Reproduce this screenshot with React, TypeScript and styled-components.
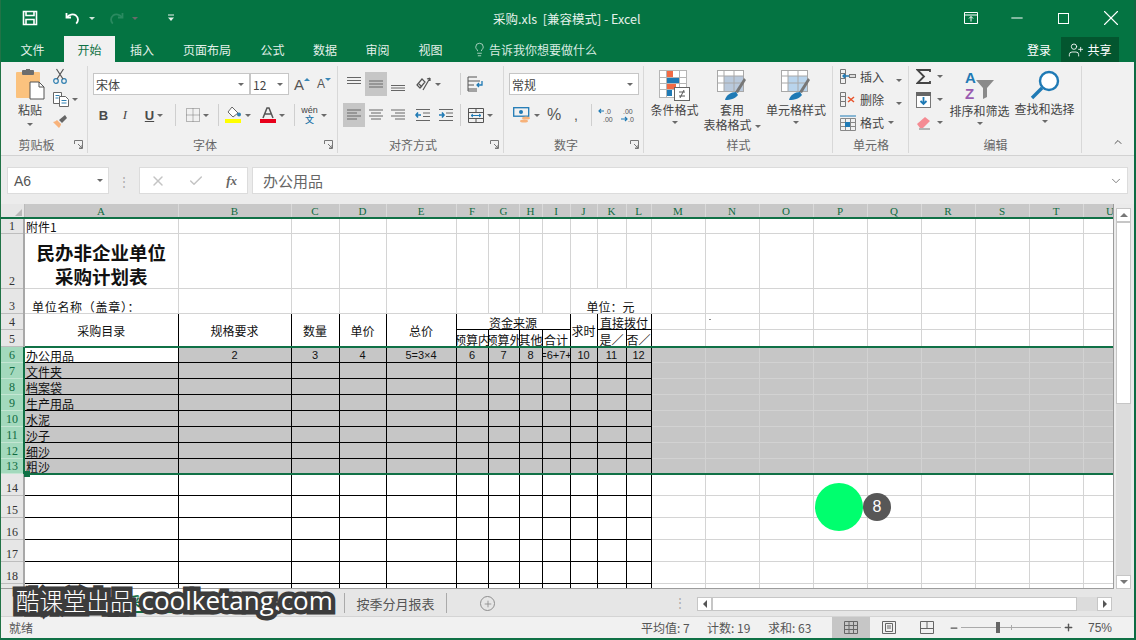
import React from 'react'
import styled, { createGlobalStyle } from 'styled-components'
import { Check, ChevronUp, ChevronDown, Lightbulb, Minus, Plus, UserPlus, X } from 'lucide-react'

const CJK = `"Noto Sans CJK SC", "Liberation Sans", sans-serif`

const GlobalStyle = createGlobalStyle`
  html, body {
    margin: 0;
    padding: 0;
    width: 1136px;
    height: 640px;
    overflow: hidden;
    background: #f1f1f1;
    font-family: ${CJK};
  }
  * { box-sizing: border-box; }
`

const Window = styled.div`
  position: relative;
  width: 1136px;
  height: 640px;
  display: flex;
  flex-direction: column;
  overflow: hidden;
  background: #f1f1f1;
  border-left: 1px solid #217346;
  border-right: 2px solid #0d6b43;
  border-bottom: 2px solid #107146;
`

/* ---------- title bar ---------- */

const TitleBar = styled.div`
  height: 36px;
  flex: none;
  background: #047442;
  color: #fff;
  display: flex;
  align-items: center;
`

const Qat = styled.div`
  display: flex;
  align-items: center;
  padding-left: 21px;
  width: 440px;
  flex: none;
`

const QatBtn = styled.span<{ $w: number }>`
  display: inline-flex;
  align-items: center;
  gap: 8px;
  width: ${(p) => p.$w}px;
`

const TitleText = styled.div`
  flex: 1;
  font-size: 12.5px;
  color: #e4f1ea;
  padding-left: 52px;
  white-space: pre;
`

const WinButtons = styled.div`
  display: flex;
  align-items: center;
  flex: none;
`

const WinBtn = styled.span`
  width: 46.7px;
  display: inline-flex;
  justify-content: center;
  color: #fff;
`

const MaxBox = styled.span`
  display: block;
  width: 11px;
  height: 11px;
  border: 1px solid #fff;
`

/* ---------- tabs ---------- */

const TabBar = styled.div`
  height: 26px;
  flex: none;
  background: #047442;
  display: flex;
  align-items: flex-end;
`

const Tab = styled.div<{ $active?: boolean; $w: number }>`
  width: ${(p) => p.$w}px;
  height: 26px;
  display: flex;
  align-items: center;
  justify-content: center;
  font-size: 12px;
  color: ${(p) => (p.$active ? '#107146' : '#e3f0e9')};
  background: ${(p) => (p.$active ? '#f1f1f1' : 'transparent')};
`

const TellMe = styled.div`
  display: flex;
  align-items: center;
  gap: 2px;
  margin-left: 16px;
  height: 26px;
  font-size: 12px;
  color: #d8ebe1;
  flex: 1;
`

const Login = styled.div`
  font-size: 12px;
  color: #fff;
  height: 26px;
  display: flex;
  align-items: center;
  margin-right: 10px;
`

const Share = styled.div`
  width: 58px;
  height: 25px;
  margin-right: 15px;
  background: #03562f;
  color: #fff;
  font-size: 12px;
  display: flex;
  align-items: center;
  justify-content: center;
  gap: 3px;
`

/* ---------- ribbon ---------- */

const Ribbon = styled.div`
  height: 94px;
  flex: none;
  display: flex;
  background: #f1f1f1;
  border-bottom: 1px solid #d2d2d2;
  position: relative;
`

const Group = styled.div<{ $w: number }>`
  width: ${(p) => p.$w}px;
  flex: none;
  position: relative;
  display: flex;
  flex-direction: column;
  padding-bottom: 1px;
  &::after {
    content: '';
    position: absolute;
    right: 0;
    top: 4px;
    bottom: 2px;
    width: 1px;
    background: #d8d8d8;
  }
`

const GroupBody = styled.div`
  flex: 1;
  display: flex;
  min-height: 0;
`

const GroupLabel = styled.div<{ $launch?: boolean }>`
  height: 20px;
  flex: none;
  display: flex;
  align-items: center;
  justify-content: center;
  font-size: 12px;
  color: #666;
  position: relative;
  padding-right: ${(p) => (p.$launch ? 16 : 0)}px;
`

const Launcher = styled.svg`
  position: absolute;
  right: 5px;
  top: 6px;
  width: 9px;
  height: 9px;
`

const Caret = styled.span<{ $light?: boolean }>`
  display: inline-block;
  width: 0;
  height: 0;
  border-left: 3px solid transparent;
  border-right: 3px solid transparent;
  border-top: 3px solid ${(p) => (p.$light ? '#cfe6da' : '#6a6a6a')};
`

const PasteCol = styled.div`
  width: 48px;
  display: flex;
  flex-direction: column;
  align-items: center;
  padding: 7px 0 0 10px;
  font-size: 12px;
  color: #444;
  line-height: 14px;
  gap: 1px;
  & > span {
    margin-top: 5px;
  }
`

const SmallCol = styled.div`
  display: flex;
  flex-direction: column;
  gap: 3px;
  padding: 6px 0 0 3px;
`

const Stack = styled.div`
  display: flex;
  flex-direction: column;
  padding: 10px 0 0 5px;
  gap: 7px;
`

const ToolRow = styled.div`
  height: 24px;
  display: flex;
  align-items: center;
`

const Combo = styled.div<{ $w: number }>`
  width: ${(p) => p.$w}px;
  height: 22px;
  background: #fff;
  border: 1px solid #c6c6c6;
  display: flex;
  align-items: center;
  justify-content: space-between;
  padding: 0 5px 0 2px;
  font-size: 12px;
  color: #444;
`

const ToolBtn = styled.div<{ $w?: number; $on?: boolean }>`
  width: ${(p) => p.$w ?? 22}px;
  height: 24px;
  display: flex;
  align-items: center;
  justify-content: center;
  gap: 3px;
  flex: none;
  background: ${(p) => (p.$on ? '#c6c6c6' : 'transparent')};
  color: #444;
  font-size: 12px;
`

const VSep = styled.div<{ $ml?: number }>`
  width: 1px;
  height: 22px;
  background: #cfcfcf;
  margin: 0 3px 0 ${(p) => p.$ml ?? 3}px;
  flex: none;
`

const StyleGlyph = styled.span<{ $kind: 'b' | 'i' | 'u' }>`
  font-family: ${(p) => (p.$kind === 'i' ? '"Liberation Serif", serif' : '"Liberation Sans", sans-serif')};
  font-size: 13px;
  font-weight: ${(p) => (p.$kind === 'i' ? 400 : 700)};
  font-style: ${(p) => (p.$kind === 'i' ? 'italic' : 'normal')};
  text-decoration: ${(p) => (p.$kind === 'u' ? 'underline' : 'none')};
  color: #4a4a4a;
`

const GrowA = styled.span<{ $size: number }>`
  font-family: "Liberation Sans", sans-serif;
  font-size: ${(p) => p.$size}px;
  color: #555;
  line-height: 1;
`

const SizeTip = styled.span<{ $down?: boolean }>`
  display: block;
  width: 0;
  height: 0;
  margin: -10px 0 0 -3px;
  border-left: 3px solid transparent;
  border-right: 3px solid transparent;
  ${(p) => (p.$down ? 'border-top' : 'border-bottom')}: 3px solid #3a87b7;
`

const Phonetic = styled.span`
  display: flex;
  flex-direction: column;
  align-items: center;
  line-height: 9px;
  font-size: 9px;
  color: #444;
  font-family: "Liberation Sans", sans-serif;
  & b {
    font-family: ${CJK};
    font-weight: 500;
    color: #1e74a8;
  }
`

const BigBtn = styled.div<{ $w: number }>`
  width: ${(p) => p.$w}px;
  display: flex;
  flex-direction: column;
  align-items: center;
  padding-top: 8px;
  font-size: 12px;
  color: #444;
  line-height: 15px;
  text-align: center;
  flex: none;
  white-space: nowrap;
  & > svg {
    margin-bottom: 1px;
  }
  & > span:empty {
    margin-top: 4px;
  }
  & > span > span {
    margin-left: 3px;
    vertical-align: middle;
  }
`

const CellsCol = styled.div`
  display: flex;
  flex-direction: column;
  padding: 3px 0 0 7px;
`

const CellsItem = styled.div`
  height: 23px;
  display: flex;
  align-items: center;
  gap: 4px;
  font-size: 12px;
  color: #444;
  white-space: nowrap;
  & > i {
    margin-left: 8px;
  }
`

const SumCol = styled.div`
  width: 38px;
  flex: none;
  display: flex;
  flex-direction: column;
  padding: 3px 0 0 7px;
`

const SumItem = styled.div`
  height: 23px;
  display: flex;
  align-items: center;
  gap: 6px;
`

const CollapseBtn = styled.div`
  position: absolute;
  right: 10px;
  bottom: 2px;
  color: #555;
`

/* ---------- formula bar ---------- */

const FormulaBar = styled.div`
  height: 48px;
  flex: none;
  display: flex;
  align-items: flex-start;
  padding: 11px 6px 0 6px;
  background: #ececec;
`

const NameBox = styled.div`
  width: 102px;
  height: 27px;
  background: #fff;
  border: 1px solid #dcdcdc;
  display: flex;
  align-items: center;
  justify-content: space-between;
  padding: 0 5px 0 6px;
  font-family: "Liberation Sans", sans-serif;
  font-size: 14px;
  color: #555;
`

const Dots = styled.div`
  width: 30px;
  height: 27px;
  display: flex;
  align-items: center;
  justify-content: center;
  color: #aaa;
  font-size: 12px;
`

const FxBox = styled.div`
  width: 109px;
  height: 27px;
  background: #fff;
  border: 1px solid #dcdcdc;
  display: flex;
  align-items: center;
  justify-content: space-between;
  padding: 0 10px;
  color: #c4c4c4;
`

const FxGlyph = styled.span`
  font-family: "Liberation Serif", serif;
  font-style: italic;
  font-weight: 700;
  font-size: 13px;
  color: #666;
`

const FormulaInput = styled.div`
  flex: 1;
  height: 27px;
  margin-left: 4px;
  background: #fff;
  border: 1px solid #dcdcdc;
  display: flex;
  align-items: center;
  justify-content: space-between;
  padding: 0 4px 0 10px;
  font-size: 15px;
  color: #666;
`

/* ---------- sheet ---------- */

const SheetRow = styled.div`
  height: 385px;
  flex: none;
  display: flex;
  background: #e6e6e6;
`

const SheetClip = styled.div`
  width: 1113px;
  height: 385px;
  overflow: hidden;
  flex: none;
  background: #fff;
  border-right: 1px solid #9c9c9c;
  border-bottom: 1px solid #9c9c9c;
  position: relative;
`

const Table = styled.table`
  border-collapse: collapse;
  table-layout: fixed;
  width: 1136px;
  font-size: 12px;
  color: #222;
`

const ColHead = styled.th`
  height: 14px;
  padding: 0;
  background: #c8c8c8;
  font-family: "Liberation Serif", serif;
  font-weight: 400;
  font-size: 11px;
  line-height: 12px;
  color: #0f6b41;
  border-right: 1px solid #dadada;
  border-bottom: 2px solid #107146;
  overflow: hidden;
  &:first-child {
    background: #e6e6e6;
    border-right: 1px solid #bbb;
  }
`

const CornerMark = styled.span`
  display: block;
  width: 0;
  height: 0;
  margin: 4px 2px 0 auto;
  border-left: 7px solid transparent;
  border-bottom: 7px solid #b8b8b8;
`

const RowHead = styled.th<{ $sel?: boolean }>`
  padding: 0;
  background: ${(p) => (p.$sel ? '#a3d9bd' : '#e6e6e6')};
  color: ${(p) => (p.$sel ? '#0f6b41' : '#333')};
  font-family: "Liberation Serif", serif;
  font-weight: 400;
  font-size: 12px;
  text-align: center;
  vertical-align: bottom;
  line-height: 14px;
  border-bottom: 1px solid ${(p) => (p.$sel ? '#c4e6d3' : '#bdbdbd')};
  border-right: 2px solid ${(p) => (p.$sel ? '#107146' : '#a8a8a8')};
  overflow: hidden;
`

type CellProps = {
  $black?: boolean
  $gray?: boolean
  $align?: 'left' | 'center'
  $valign?: 'middle' | 'bottom'
  $big?: boolean
  $pad?: number
  $spread?: number
}

const Cell = styled.td<CellProps>`
  padding: ${(p) => (p.$big ? 6 : 0)}px ${(p) => p.$pad ?? 1}px 0 ${(p) => p.$pad ?? 1}px;
  border: 1px solid ${(p) => (p.$black ? '#000' : p.$gray ? '#d2d2d2' : '#d4d4d4')};
  background: ${(p) => (p.$gray ? '#c6c6c6' : '#fff')};
  text-align: ${(p) => p.$align ?? 'left'};
  vertical-align: ${(p) => p.$valign ?? 'bottom'};
  white-space: ${(p) => (p.$big ? 'normal' : 'nowrap')};
  overflow: hidden;
  line-height: ${(p) => (p.$big ? '24px' : '13px')};
  font-size: ${(p) => (p.$big ? '18.5px' : '12px')};
  font-weight: ${(p) => (p.$big ? 700 : 400)};
  letter-spacing: ${(p) => p.$spread ?? 0}px;
  color: #111;
`

const Fit = styled.span`
  display: flex;
  justify-content: center;
  white-space: nowrap;
`

const NumText = styled.span`
  font-family: "Liberation Sans", sans-serif;
  font-size: 11px;
`

const SelLine = styled.div<{ $top: number }>`
  position: absolute;
  left: 24px;
  right: 0;
  top: ${(p) => p.$top}px;
  height: 2px;
  background: #107146;
  pointer-events: none;
`

const FillHandle = styled.div`
  position: absolute;
  left: 23px;
  top: 267px;
  width: 6px;
  height: 6px;
  background: #107146;
`

const Tick = styled.div`
  position: absolute;
  left: 708px;
  top: 115px;
  width: 2px;
  height: 1px;
  background: #888;
`

const Cursor = styled.div`
  position: absolute;
  left: 814px;
  top: 279px;
  width: 48px;
  height: 48px;
  border-radius: 50%;
  background: #00ff6e;
`

const ClickBadge = styled.div`
  position: absolute;
  left: 862px;
  top: 289px;
  width: 28px;
  height: 28px;
  border-radius: 50%;
  background: #575757;
  color: #fff;
  font-family: "Liberation Sans", sans-serif;
  font-size: 16px;
  display: flex;
  align-items: center;
  justify-content: center;
`

const VScroll = styled.div`
  width: 20px;
  flex: none;
  display: flex;
  flex-direction: column;
  padding: 4px 3px 0 2px;
  background: #eaeaea;
`

const ScrollBtn = styled.div`
  width: 15px;
  height: 14px;
  background: #fff;
  border: 1px solid #c6c6c6;
  display: flex;
  align-items: center;
  justify-content: center;
  flex: none;
`

const VThumb = styled.div`
  width: 15px;
  height: 182px;
  background: #fff;
  border: 1px solid #c6c6c6;
  flex: none;
`

const VTrack = styled.div`
  flex: 1;
  background: #dcdcdc;
`

const Arrow = styled.span<{ $dir: 'up' | 'down' | 'left' | 'right' }>`
  display: block;
  width: 0;
  height: 0;
  ${(p) =>
    p.$dir === 'up'
      ? 'border-left:4px solid transparent;border-right:4px solid transparent;border-bottom:4px solid #777;'
      : p.$dir === 'down'
        ? 'border-left:4px solid transparent;border-right:4px solid transparent;border-top:4px solid #777;'
        : p.$dir === 'left'
          ? 'border-top:4px solid transparent;border-bottom:4px solid transparent;border-right:4px solid #555;'
          : 'border-top:4px solid transparent;border-bottom:4px solid transparent;border-left:4px solid #555;'}
`

/* ---------- sheet tabs ---------- */

const SheetTabs = styled.div`
  height: 28px;
  flex: none;
  display: flex;
  align-items: flex-start;
  background: #e6e6e6;
  font-size: 13px;
  color: #444;
  border-bottom: 1px solid #d4d4d4;
`

const SheetTab = styled.div<{ $active?: boolean; $w: number; $plain?: boolean }>`
  width: ${(p) => p.$w}px;
  flex: none;
  height: ${(p) => (p.$active ? 24 : 20)}px;
  margin-top: ${(p) => (p.$active ? 0 : 4)}px;
  display: flex;
  align-items: center;
  justify-content: center;
  background: ${(p) => (p.$active ? '#fff' : 'transparent')};
  color: ${(p) => (p.$active ? '#107146' : '#555')};
  font-weight: ${(p) => (p.$active ? 700 : 400)};
  border-bottom: ${(p) => (p.$active ? '2px solid #107146' : 'none')};
  border-right: ${(p) => (p.$active || p.$plain ? 'none' : '1px solid #aaa')};
  white-space: nowrap;
  overflow: hidden;
`

const AddSheet = styled.div`
  width: 15px;
  height: 15px;
  border-radius: 50%;
  border: 1.5px solid #8d8d8d;
  color: #8d8d8d;
  margin: 7px 0 0 33px;
  display: flex;
  align-items: center;
  justify-content: center;
  flex: none;
`

const TabDots = styled.div`
  margin: 0 9px 0 177px;
  width: 16px;
  height: 28px;
  color: #aaa;
  text-align: center;
  line-height: 25px;
  flex: none;
  font-size: 12px;
`

const HScroll = styled.div`
  width: 415px;
  height: 14px;
  margin-top: 8px;
  display: flex;
  flex: none;
`

const HBtn = styled.div`
  width: 15px;
  height: 14px;
  background: #fff;
  border: 1px solid #c6c6c6;
  display: flex;
  align-items: center;
  justify-content: center;
  flex: none;
`

const HThumb = styled.div`
  width: 365px;
  background: #fff;
  border: 1px solid #c6c6c6;
  flex: none;
`

const HTrack = styled.div`
  flex: 1;
  background: #dcdcdc;
`

/* ---------- status bar ---------- */

const StatusBar = styled.div`
  flex: 1;
  display: flex;
  align-items: center;
  background: #f1f1f1;
  font-size: 12px;
  color: #555;
  padding-left: 8px;
`

const StatusText = styled.div`
  flex: 1;
`

const StatusInfo = styled.div<{ $w: number }>`
  width: ${(p) => p.$w}px;
  flex: none;
  white-space: nowrap;
`

const ViewBtn = styled.div<{ $on?: boolean }>`
  width: 38px;
  height: 21px;
  display: flex;
  align-items: center;
  justify-content: center;
  background: ${(p) => (p.$on ? '#c6c6c6' : 'transparent')};
  flex: none;
`

const ZoomRow = styled.div`
  display: flex;
  align-items: center;
  padding-left: 3px;
  flex: none;
`

const ZoomSlider = styled.div`
  width: 100px;
  height: 1px;
  background: #aaa;
  position: relative;
  margin: 0 2px;
  flex: none;
`

const ZoomThumb = styled.div`
  position: absolute;
  left: 35px;
  top: -5px;
  width: 4px;
  height: 11px;
  background: #666;
`

const ZoomMid = styled.div`
  position: absolute;
  left: 50px;
  top: -2px;
  width: 1px;
  height: 5px;
  background: #aaa;
`

const ZoomPct = styled.div`
  width: 60px;
  padding-left: 14px;
  flex: none;
  font-family: "Liberation Sans", sans-serif;
`

/* ---------- watermark ---------- */

const Watermark = styled.div`
  position: absolute;
  left: 15px;
  top: 583px;
  display: flex;
  align-items: center;
  color: #fff;
  white-space: nowrap;
  paint-order: stroke fill;
  -webkit-text-stroke: 9px #3c3c3c;
  height: 34px;
  line-height: 34px;
`

const WaterCn = styled.span`
  font-family: ${CJK};
  font-weight: 300;
  font-size: 23.5px;
`

const WaterEn = styled.span`
  font-family: "Open Sans", "Liberation Sans", sans-serif;
  font-size: 26px;
  margin-left: 8px;
`

/* ---------- icons ---------- */

const SaveIcon = () => (
  <svg width="16" height="16" viewBox="0 0 16 16" fill="none" stroke="#fff" strokeWidth="1.6">
    <path d="M1.5 1.5h13v13h-13z" />
    <path d="M4 1.5v4h8v-4M4 14.500v-5h8v5" />
  </svg>
)

const UndoIcon = ({ color = '#fff' }: { color?: string }) => (
  <svg width="16" height="16" viewBox="0 0 16 16" fill="none" stroke={color} strokeWidth="1.8">
    <path d="M1.500 3v4.500H6" />
    <path d="M2 7.200C4 4.500 8 3.400 11 5.600c2.600 2 2.600 5.600.2 8" />
  </svg>
)

const RedoIcon = () => (
  <svg width="16" height="16" viewBox="0 0 16 16" fill="none" stroke="#2a8a60" strokeWidth="1.8">
    <path d="M14.500 3v4.500H10" />
    <path d="M14 7.200C12 4.500 8 3.400 5 5.600c-2.600 2-2.600 5.600-.2 8" />
  </svg>
)

const CustomizeIcon = () => (
  <svg width="8" height="8" viewBox="0 0 8 8" fill="#e7f2ec">
    <rect x="1" y="0.5" width="6" height="1" />
    <path d="M1 3.500h6L4 7z" />
  </svg>
)

const RestoreIcon = () => (
  <svg width="14" height="12" viewBox="0 0 14 12" fill="none" stroke="#fff" strokeWidth="1">
    <path d="M.5.5h13v11H.5zM.5 3h13M7 9.500v-5M5 6.500l2-2 2 2" />
  </svg>
)

const LauncherMark = () => (
  <Launcher viewBox="0 0 9 9" fill="none" stroke="#777">
    <path d="M.5 4V.5h8v8H5M4 4l4 4M5 8h3V5" />
  </Launcher>
)

const PasteIcon = () => (
  <svg width="29" height="33" viewBox="0 0 29 33">
    <rect x="0" y="3" width="24" height="26" rx="1" fill="#fbc27e" />
    <rect x="6" y="1" width="12" height="5" rx="1" fill="#6d6d6d" />
    <rect x="10" y="0" width="4" height="3" fill="#6d6d6d" />
    <path d="M14 13h9l5 5v12H14z" fill="#fff" stroke="#555" />
    <path d="M23 13v5h5" fill="none" stroke="#555" />
  </svg>
)

const CutIcon = () => (
  <svg width="16" height="16" viewBox="0 0 16 16" fill="none" stroke="#2f7fb0" strokeWidth="1.2">
    <circle cx="4" cy="13" r="2.300" />
    <circle cx="12" cy="13" r="2.300" />
    <path d="M5 11L11.500 1M11 11L4.500 1" stroke="#555" />
  </svg>
)

const CopyIcon = () => (
  <svg width="16" height="15" viewBox="0 0 16 15" fill="#fff" stroke="#666" strokeWidth="1">
    <path d="M.5.5h8v11h-8z" />
    <path d="M6.500 4.500h6l3 3v7h-9z" />
    <path d="M2.500 3.500h4M2.500 6h3M8.500 8.500h5M8.500 11h5" stroke="#2f7fb0" />
  </svg>
)

const BrushIcon = () => (
  <svg width="16" height="16" viewBox="0 0 16 16">
    <path d="M1 8l6 6c1-1 2-3 2-4L5 6C4 7 2 8 1 8z" fill="#f8b27a" />
    <path d="M7 6l3 3 5-5-2-3z" fill="#666" />
  </svg>
)

const BordersIcon = () => (
  <svg width="14" height="14" viewBox="0 0 14 14" fill="none" stroke="#777" strokeWidth="1" strokeDasharray="1 1">
    <path d="M.5.5h13v13H.5zM7 .5v13M.5 7h13" />
  </svg>
)

const FillIcon = () => (
  <svg width="17" height="16" viewBox="0 0 17 16">
    <path d="M7 0l6 6-5 4-5-5z" fill="#fff" stroke="#666" />
    <circle cx="14" cy="7.500" r="2" fill="#2f7fb0" />
    <rect x="0" y="12" width="16" height="4" fill="#ffff00" />
  </svg>
)

const FontColorIcon = () => (
  <svg width="16" height="16" viewBox="0 0 16 16">
    <path d="M3 11L7 1h2l4 10M5 7h6" fill="none" stroke="#555" strokeWidth="1.5" />
    <rect x="0" y="12" width="16" height="4" fill="#e8001b" />
  </svg>
)

const LinesIcon = ({ mode }: { mode: 'l' | 'c' | 'r' | 't' | 'm' | 'b' }) => {
  const rows: Record<string, string> = {
    l: 'M1 2h14M1 5h10M1 8h14M1 11h10',
    c: 'M1 2h14M3 5h10M1 8h14M3 11h10',
    r: 'M1 2h14M5 5h10M1 8h14M5 11h10',
    t: 'M1 .5h14M1 3.500h14M1 6.500h14',
    m: 'M1 4h14M1 7h14M1 10h14',
    b: 'M1 8.500h14M1 11h14M1 13.500h14',
  }
  return (
    <svg width="16" height="14" viewBox="0 0 16 14" fill="none" stroke="#666" strokeWidth="1">
      <path d={rows[mode]} />
    </svg>
  )
}

const OrientIcon = () => (
  <svg width="16" height="16" viewBox="0 0 16 16" fill="none" stroke="#555" strokeWidth="1.2">
    <path d="M1 9l5-6 3 3-5 6zM3 8l3 3M14 2L7 14M14 2l-3 1M14 2v3" />
  </svg>
)

const IndentIcon = ({ dir }: { dir: 'in' | 'out' }) => (
  <svg width="16" height="14" viewBox="0 0 16 14" fill="none" stroke="#666" strokeWidth="1">
    <path d="M1 1.500h14M8 5h7M8 8.500h7M1 12.500h14" />
    <path d={dir === 'out' ? 'M6 7H1M3 4.500L1 7l2 2.500' : 'M1 7h5M4 4.500L6 7 4 9.500'} stroke="#1f7ab5" strokeWidth="1.6" />
  </svg>
)

const WrapIcon = () => (
  <svg width="17" height="16" viewBox="0 0 17 16" fill="none" stroke="#555" strokeWidth="1">
    <path d="M1 1h9M1 1v14h9M1 5h12M1 9h6M1 13h9" />
    <path d="M15 5v4h-5M12 7l-2 2 2 2" stroke="#1f7ab5" strokeWidth="1.3" />
  </svg>
)

const MergeIcon = () => (
  <svg width="16" height="15" viewBox="0 0 16 15" fill="none" stroke="#555" strokeWidth="1">
    <path d="M.5.5h15v14H.5zM.5 4.500h15M.5 10.500h15M8 .5v4M8 10.500v4" />
    <path d="M3 7.500h10M5 6l-2 1.500L5 9M11 6l2 1.500L11 9" stroke="#1f7ab5" />
  </svg>
)

const CurrencyIcon = () => (
  <svg width="18" height="17" viewBox="0 0 18 17">
    <rect x="0.700" y="0.700" width="15" height="8.500" fill="none" stroke="#1f7ab5" strokeWidth="1.3" />
    <circle cx="8" cy="5" r="2" fill="#1f7ab5" />
    <ellipse cx="13" cy="11" rx="4" ry="1.600" fill="#f7b27a" />
    <ellipse cx="11" cy="14" rx="4" ry="1.600" fill="#f7b27a" />
  </svg>
)

const DecimalIcon = ({ dir }: { dir: 'inc' | 'dec' }) => (
  <svg width="17" height="15" viewBox="0 0 17 15" fill="none">
    <text x={dir === 'inc' ? 7 : 3} y="6" fontSize="7" fill="#555" fontFamily="Liberation Sans">
      {dir === 'inc' ? '.0' : '.00'}
    </text>
    <text x={dir === 'inc' ? 5 : 8} y="14" fontSize="7" fill="#555" fontFamily="Liberation Sans">
      {dir === 'inc' ? '.00' : '.0'}
    </text>
    <path d={dir === 'inc' ? 'M6 3H1M3 1L1 3l2 2' : 'M1 11h6M5 9l2 2-2 2'} stroke="#1f7ab5" strokeWidth="1.2" />
  </svg>
)

const CondFormatIcon = () => (
  <svg width="31" height="31" viewBox="0 0 31 31">
    <rect x="0.500" y="0.500" width="27" height="27" fill="#fff" stroke="#b5b5b5" />
    <rect x="8" y="1" width="6" height="6" fill="#f26a44" />
    <rect x="8" y="7" width="12" height="6" fill="#1f7ab5" />
    <rect x="8" y="13" width="9" height="6" fill="#f26a44" />
    <rect x="8" y="19" width="5" height="7" fill="#1f7ab5" />
    <path d="M7.500 1v27M20.500 1v27M1 7.500h27M1 13.500h27M1 19.500h27" stroke="#b5b5b5" fill="none" />
    <rect x="15.500" y="17.500" width="15" height="13" fill="#fff" stroke="#666" />
    <path d="M20 22h6M20 26h6M25 20l-4 8" stroke="#555" fill="none" />
  </svg>
)

const TableFormatIcon = ({ fill }: { fill: string }) => (
  <svg width="30" height="31" viewBox="0 0 30 31">
    <rect x="0.500" y="0.500" width="26" height="21" fill="#fff" stroke="#a8a8a8" />
    <rect x="7" y="6" width="19" height="15" fill={fill} />
    <path d="M7 1v20M17 1v20M1 6h25M1 13h25" stroke="#a8a8a8" fill="none" />
    <path d="M18 22l9-14 2 2-8 13z" fill="#777" />
    <path d="M8 30c1-5 6-8 11-8l2 3c-2 3-7 5-13 5z" fill="#1f7ab5" />
  </svg>
)

const InsertCellIcon = ({ del }: { del?: boolean }) => (
  <svg width="16" height="15" viewBox="0 0 16 15" fill="none" stroke="#777" strokeWidth="1">
    <path d="M.5 4.500h5v5h-5zM.5 9.500h5v5h-5zM.5.5h5v4h-5z" />
    {del ? (
      <path d="M8 5l6 5M14 5l-6 5" stroke="#e8532b" strokeWidth="1.500" />
    ) : (
      <>
        <rect x="9.500" y="5.500" width="6" height="3" fill="#ddd" />
        <path d="M9 7H3M5 5L3 7l2 2" stroke="#1f7ab5" strokeWidth="1.400" />
      </>
    )}
  </svg>
)

const FormatCellIcon = () => (
  <svg width="16" height="16" viewBox="0 0 16 16" fill="none" stroke="#888" strokeWidth="1">
    <path d="M.5 3.500h15v12H.5zM.5 7.500h15M.5 11.500h15M5.500 3.500v12M10.500 3.500v12" />
    <rect x="5" y="7" width="5" height="5" fill="#1f7ab5" stroke="none" />
    <path d="M0 1h16" stroke="#1f7ab5" />
  </svg>
)

const SigmaIcon = () => (
  <svg width="15" height="15" viewBox="0 0 15 15" fill="none" stroke="#444" strokeWidth="1.800">
    <path d="M14 3V1H1.500L8 7.500 1.500 14H14v-2" />
  </svg>
)

const FillDownIcon = () => (
  <svg width="15" height="16" viewBox="0 0 15 16">
    <rect x="0.500" y="0.500" width="14" height="15" fill="#fff" stroke="#777" />
    <rect x="0" y="0" width="15" height="4" fill="#666" />
    <path d="M7.500 5v7M4.500 9l3 3 3-3" stroke="#1f7ab5" strokeWidth="1.800" fill="none" />
  </svg>
)

const EraserIcon = () => (
  <svg width="15" height="15" viewBox="0 0 15 15">
    <path d="M1 9l8-7 5 4-7 7H4z" fill="#f58b93" />
    <path d="M3 14h11" stroke="#777" />
  </svg>
)

const SortIcon = () => (
  <svg width="36" height="32" viewBox="0 0 36 32">
    <text x="3" y="13" fontSize="15" fontWeight="700" fontFamily="Liberation Sans" fill="#1f7ab5">A</text>
    <text x="3" y="29" fontSize="15" fontWeight="700" fontFamily="Liberation Sans" fill="#9a5bb0">Z</text>
    <path d="M14 10h18l-7 8v9l-4 2V18z" fill="#8a8a8a" />
  </svg>
)

const FindIcon = () => (
  <svg width="30" height="30" viewBox="0 0 30 30" fill="none">
    <circle cx="19" cy="11" r="9" stroke="#1f7ab5" strokeWidth="2.400" fill="#fff" />
    <path d="M12 18L2 28" stroke="#1f7ab5" strokeWidth="3.400" />
  </svg>
)

const GridViewIcon = () => (
  <svg width="14" height="13" viewBox="0 0 14 13" fill="none" stroke="#666" strokeWidth="1">
    <path d="M.5.5h13v12H.5zM.5 4.500h13M.5 8.500h13M5 .5v12M9.500 .5v12" />
  </svg>
)

const PageViewIcon = () => (
  <svg width="14" height="13" viewBox="0 0 14 13" fill="none" stroke="#666" strokeWidth="1">
    <path d="M.5.5h13v12H.5zM3.500 2.500h7v8h-7zM5 5h4M5 7h4" />
  </svg>
)

const BreakViewIcon = () => (
  <svg width="14" height="13" viewBox="0 0 14 13" fill="none" stroke="#666" strokeWidth="1">
    <path d="M.5.5h13v12H.5zM.5 7.500h13M7 .5v7" />
  </svg>
)

/* ---------- sheet data ---------- */

const colWidths = [23, 154, 113, 48, 47, 70, 32, 31, 23, 28, 27, 29, 25, 54, 54, 54, 54, 54, 54, 54, 54, 54]
const colNames = 'A B C D E F G H I J K L M N O P Q R S T U'.split(' ')
const emptyCols = 9
const blackCols = 12

const items = ['文件夹', '档案袋', '生产用品', '水泥', '沙子', '细沙', '粗沙']
const numbering = ['2', '3', '4', '5=3×4', '6', '7', '8', '=6+7+', '10', '11', '12']

const Plain = ({ n }: { n: number }) => (
  <>
    {Array.from({ length: n }, (_, i) => (
      <Cell key={i} />
    ))}
  </>
)

export default function App() {
  return (
    <Window>
      <GlobalStyle />
      <TitleBar>
        <Qat>
          <QatBtn $w={43}>
            <SaveIcon />
          </QatBtn>
          <QatBtn $w={43}>
            <UndoIcon />
            <Caret $light />
          </QatBtn>
          <QatBtn $w={59}>
            <RedoIcon />
            <Caret />
          </QatBtn>
          <QatBtn $w={20}>
            <CustomizeIcon />
          </QatBtn>
        </Qat>
        <TitleText>采购.xls  [兼容模式] - Excel</TitleText>
        <WinButtons>
          <WinBtn>
            <RestoreIcon />
          </WinBtn>
          <WinBtn>
            <Minus size={18} strokeWidth={1.33} />
          </WinBtn>
          <WinBtn>
            <MaxBox />
          </WinBtn>
          <WinBtn>
            <X size={26} strokeWidth={1} />
          </WinBtn>
        </WinButtons>
      </TitleBar>

      <TabBar>
        <Tab $w={63}>文件</Tab>
        <Tab $w={51} $active>
          开始
        </Tab>
        <Tab $w={54}>插入</Tab>
        <Tab $w={76}>页面布局</Tab>
        <Tab $w={55}>公式</Tab>
        <Tab $w={50}>数据</Tab>
        <Tab $w={55}>审阅</Tab>
        <Tab $w={51}>视图</Tab>
        <TellMe>
          <Lightbulb size={15} strokeWidth={1.2} />
          告诉我你想要做什么
        </TellMe>
        <Login>登录</Login>
        <Share>
          <UserPlus size={16} strokeWidth={1.3} />
          共享
        </Share>
      </TabBar>

      <Ribbon>
        <Group $w={87}>
          <GroupBody>
            <PasteCol>
              <PasteIcon />
              粘贴
              <Caret />
            </PasteCol>
            <SmallCol>
              <CutIcon />
              <ToolBtn $w={26}>
                <CopyIcon />
                <Caret />
              </ToolBtn>
              <BrushIcon />
            </SmallCol>
          </GroupBody>
          <GroupLabel $launch>
            剪贴板
            <LauncherMark />
          </GroupLabel>
        </Group>

        <Group $w={250}>
          <GroupBody>
            <Stack>
              <ToolRow>
                <Combo $w={157}>
                  宋体
                  <Caret />
                </Combo>
                <Combo $w={39}>
                  12
                  <Caret />
                </Combo>
                <ToolBtn $w={26}>
                  <GrowA $size={15}>A</GrowA>
                  <SizeTip />
                </ToolBtn>
                <ToolBtn $w={18}>
                  <GrowA $size={12}>A</GrowA>
                  <SizeTip $down />
                </ToolBtn>
              </ToolRow>
              <ToolRow>
                <ToolBtn $w={21}>
                  <StyleGlyph $kind="b">B</StyleGlyph>
                </ToolBtn>
                <ToolBtn $w={22}>
                  <StyleGlyph $kind="i">I</StyleGlyph>
                </ToolBtn>
                <ToolBtn $w={36}>
                  <StyleGlyph $kind="u">U</StyleGlyph>
                  <Caret />
                </ToolBtn>
                <VSep />
                <ToolBtn $w={36}>
                  <BordersIcon />
                  <Caret />
                </ToolBtn>
                <VSep />
                <ToolBtn $w={32}>
                  <FillIcon />
                  <Caret />
                </ToolBtn>
                <ToolBtn $w={37}>
                  <FontColorIcon />
                  <Caret />
                </ToolBtn>
                <VSep />
                <ToolBtn $w={32}>
                  <Phonetic>
                    wén
                    <b>文</b>
                  </Phonetic>
                  <Caret />
                </ToolBtn>
              </ToolRow>
            </Stack>
          </GroupBody>
          <GroupLabel $launch>
            字体
            <LauncherMark />
          </GroupLabel>
        </Group>

        <Group $w={166}>
          <GroupBody>
            <Stack>
              <ToolRow>
                <ToolBtn>
                  <LinesIcon mode="t" />
                </ToolBtn>
                <ToolBtn $on>
                  <LinesIcon mode="m" />
                </ToolBtn>
                <ToolBtn>
                  <LinesIcon mode="b" />
                </ToolBtn>
                <ToolBtn $w={38}>
                  <OrientIcon />
                  <Caret />
                </ToolBtn>
                <VSep $ml={13} />
                <ToolBtn $w={22}>
                  <WrapIcon />
                </ToolBtn>
              </ToolRow>
              <ToolRow>
                <ToolBtn $on>
                  <LinesIcon mode="l" />
                </ToolBtn>
                <ToolBtn>
                  <LinesIcon mode="c" />
                </ToolBtn>
                <ToolBtn>
                  <LinesIcon mode="r" />
                </ToolBtn>
                <ToolBtn $w={28}>
                  <IndentIcon dir="out" />
                </ToolBtn>
                <ToolBtn $w={18}>
                  <IndentIcon dir="in" />
                </ToolBtn>
                <VSep $ml={5} />
                <ToolBtn $w={32}>
                  <MergeIcon />
                  <Caret />
                </ToolBtn>
              </ToolRow>
            </Stack>
          </GroupBody>
          <GroupLabel $launch>
            对齐方式
            <LauncherMark />
          </GroupLabel>
        </Group>

        <Group $w={140}>
          <GroupBody>
            <Stack>
              <ToolRow>
                <Combo $w={130}>
                  常规
                  <Caret />
                </Combo>
              </ToolRow>
              <ToolRow>
                <ToolBtn $w={34}>
                  <CurrencyIcon />
                  <Caret />
                </ToolBtn>
                <ToolBtn $w={22}>
                  <GrowA $size={16}>%</GrowA>
                </ToolBtn>
                <ToolBtn $w={22}>
                  <GrowA $size={14}>,</GrowA>
                </ToolBtn>
                <VSep $ml={4} />
                <ToolBtn>
                  <DecimalIcon dir="inc" />
                </ToolBtn>
                <ToolBtn>
                  <DecimalIcon dir="dec" />
                </ToolBtn>
              </ToolRow>
            </Stack>
          </GroupBody>
          <GroupLabel $launch>
            数字
            <LauncherMark />
          </GroupLabel>
        </Group>

        <Group $w={189}>
          <GroupBody>
            <BigBtn $w={61}>
              <CondFormatIcon />
              条件格式
              <Caret />
            </BigBtn>
            <BigBtn $w={54}>
              <TableFormatIcon fill="#b9c9dc" />
              套用
              <span>
                表格格式
                <Caret />
              </span>
            </BigBtn>
            <BigBtn $w={74}>
              <TableFormatIcon fill="#b9d4ec" />
              单元格样式
              <Caret />
            </BigBtn>
          </GroupBody>
          <GroupLabel>样式</GroupLabel>
        </Group>

        <Group $w={76}>
          <GroupBody>
            <CellsCol>
              <CellsItem>
                <InsertCellIcon />
                插入
                <i>
                  <Caret />
                </i>
              </CellsItem>
              <CellsItem>
                <InsertCellIcon del />
                删除
                <i>
                  <Caret />
                </i>
              </CellsItem>
              <CellsItem>
                <FormatCellIcon />
                格式
                <Caret />
              </CellsItem>
            </CellsCol>
          </GroupBody>
          <GroupLabel>单元格</GroupLabel>
        </Group>

        <Group $w={173}>
          <GroupBody>
            <SumCol>
              <SumItem>
                <SigmaIcon />
                <Caret />
              </SumItem>
              <SumItem>
                <FillDownIcon />
                <Caret />
              </SumItem>
              <SumItem>
                <EraserIcon />
                <Caret />
              </SumItem>
            </SumCol>
            <BigBtn $w={65}>
              <SortIcon />
              排序和筛选
              <Caret />
            </BigBtn>
            <BigBtn $w={65}>
              <FindIcon />
              查找和选择
              <Caret />
            </BigBtn>
          </GroupBody>
          <GroupLabel>编辑</GroupLabel>
        </Group>
        <CollapseBtn>
          <ChevronUp size={12} strokeWidth={2} />
        </CollapseBtn>
      </Ribbon>

      <FormulaBar>
        <NameBox>
          A6
          <Caret />
        </NameBox>
        <Dots>⋮</Dots>
        <FxBox>
          <X size={16} strokeWidth={2.2} />
          <Check size={16} strokeWidth={2.2} />
          <FxGlyph>fx</FxGlyph>
        </FxBox>
        <FormulaInput>
          办公用品
          <ChevronDown size={14} strokeWidth={1.4} color="#666" />
        </FormulaInput>
      </FormulaBar>

      <SheetRow>
        <SheetClip>
          <Table>
            <colgroup>
              {colWidths.map((w, i) => (
                <col key={i} style={{ width: w }} />
              ))}
            </colgroup>
            <thead>
              <tr>
                <ColHead>
                  <CornerMark />
                </ColHead>
                {colNames.map((c) => (
                  <ColHead key={c}>{c}</ColHead>
                ))}
              </tr>
            </thead>
            <tbody>
              <tr style={{ height: 15 }}>
                <RowHead>1</RowHead>
                <Cell>附件1</Cell>
                <Plain n={20} />
              </tr>
              <tr style={{ height: 55 }}>
                <RowHead>2</RowHead>
                <Cell $big $align="center" $valign="middle" $pad={0}>
                  民办非企业单位
                  <br />
                  采购计划表
                </Cell>
                <Plain n={20} />
              </tr>
              <tr style={{ height: 25 }}>
                <RowHead>3</RowHead>
                <Cell $pad={7} $spread={0.7}>
                  单位名称（盖章）：
                </Cell>
                <Plain n={8} />
                <Cell colSpan={3} $pad={16}>
                  单位：元
                </Cell>
                <Plain n={9} />
              </tr>
              <tr style={{ height: 16 }}>
                <RowHead>4</RowHead>
                <Cell rowSpan={2} $black $align="center" $valign="middle">
                  采购目录
                </Cell>
                <Cell rowSpan={2} $black $align="center" $valign="middle">
                  规格要求
                </Cell>
                <Cell rowSpan={2} $black $align="center" $valign="middle">
                  数量
                </Cell>
                <Cell rowSpan={2} $black $align="center" $valign="middle">
                  单价
                </Cell>
                <Cell rowSpan={2} $black $align="center" $valign="middle">
                  总价
                </Cell>
                <Cell colSpan={4} $black $align="center">
                  资金来源
                </Cell>
                <Cell rowSpan={2} $black $align="center" $valign="middle" $pad={0}>
                  求时
                </Cell>
                <Cell colSpan={2} $black $align="center" $pad={0}>
                  直接拨付
                </Cell>
                <Plain n={9} />
              </tr>
              <tr style={{ height: 17 }}>
                <RowHead>5</RowHead>
                {['预算内', '预算外', '其他', '合计'].map((t) => (
                  <Cell key={t} $black $pad={0}>
                    <Fit>{t}</Fit>
                  </Cell>
                ))}
                <Cell $black $pad={0}>
                  <Fit>是／</Fit>
                </Cell>
                <Cell $black $pad={0}>
                  <Fit>否／</Fit>
                </Cell>
                <Plain n={9} />
              </tr>
              <tr style={{ height: 16 }}>
                <RowHead $sel>6</RowHead>
                <Cell $black>办公用品</Cell>
                {numbering.map((n) => (
                  <Cell key={n} $black $gray $pad={0}>
                    <Fit>
                      <NumText>{n}</NumText>
                    </Fit>
                  </Cell>
                ))}
                {Array.from({ length: emptyCols }, (_, i) => (
                  <Cell key={i} $gray />
                ))}
              </tr>
              {items.map((it, r) => (
                <tr key={it} style={{ height: r === 6 ? 15 : 16 }}>
                  <RowHead $sel>{r + 7}</RowHead>
                  <Cell $black $gray>
                    {it}
                  </Cell>
                  {Array.from({ length: blackCols - 1 }, (_, i) => (
                    <Cell key={i} $black $gray />
                  ))}
                  {Array.from({ length: emptyCols }, (_, i) => (
                    <Cell key={i} $gray />
                  ))}
                </tr>
              ))}
              {[14, 15, 16, 17, 18, 19].map((r) => (
                <tr key={r} style={{ height: 22 }}>
                  <RowHead>{r}</RowHead>
                  {Array.from({ length: blackCols }, (_, i) => (
                    <Cell key={i} $black />
                  ))}
                  <Plain n={emptyCols} />
                </tr>
              ))}
            </tbody>
          </Table>
          <SelLine $top={142} />
          <SelLine $top={269} />
          <FillHandle />
          <Tick />
          <Cursor />
          <ClickBadge>8</ClickBadge>
        </SheetClip>
        <VScroll>
          <ScrollBtn>
            <Arrow $dir="up" />
          </ScrollBtn>
          <VThumb />
          <VTrack />
          <ScrollBtn>
            <Arrow $dir="down" />
          </ScrollBtn>
        </VScroll>
      </SheetRow>

      <SheetTabs>
        <SheetTab $w={101} $plain />
        <SheetTab $w={116} $active>
          采购计划表
        </SheetTab>
        <SheetTab $w={127}>按季分月报表</SheetTab>
        <SheetTab $w={102}>按季分月报表</SheetTab>
        <AddSheet>
          <Plus size={10} strokeWidth={2} />
        </AddSheet>
        <TabDots>⋮</TabDots>
        <HScroll>
          <HBtn>
            <Arrow $dir="left" />
          </HBtn>
          <HThumb />
          <HTrack />
          <HBtn>
            <Arrow $dir="right" />
          </HBtn>
        </HScroll>
      </SheetTabs>

      <StatusBar>
        <StatusText>就绪</StatusText>
        <StatusInfo $w={66}>平均值: 7</StatusInfo>
        <StatusInfo $w={61}>计数: 19</StatusInfo>
        <StatusInfo $w={64}>求和: 63</StatusInfo>
        <ViewBtn $on>
          <GridViewIcon />
        </ViewBtn>
        <ViewBtn>
          <PageViewIcon />
        </ViewBtn>
        <ViewBtn>
          <BreakViewIcon />
        </ViewBtn>
        <ZoomRow>
          <Minus size={10} strokeWidth={3} color="#555" />
          <ZoomSlider>
            <ZoomThumb />
            <ZoomMid />
          </ZoomSlider>
          <Plus size={11} strokeWidth={3} color="#555" />
        </ZoomRow>
        <ZoomPct>75%</ZoomPct>
      </StatusBar>

      <Watermark>
        <WaterCn>酷课堂出品</WaterCn>
        <WaterEn>coolketang.com</WaterEn>
      </Watermark>
    </Window>
  )
}
